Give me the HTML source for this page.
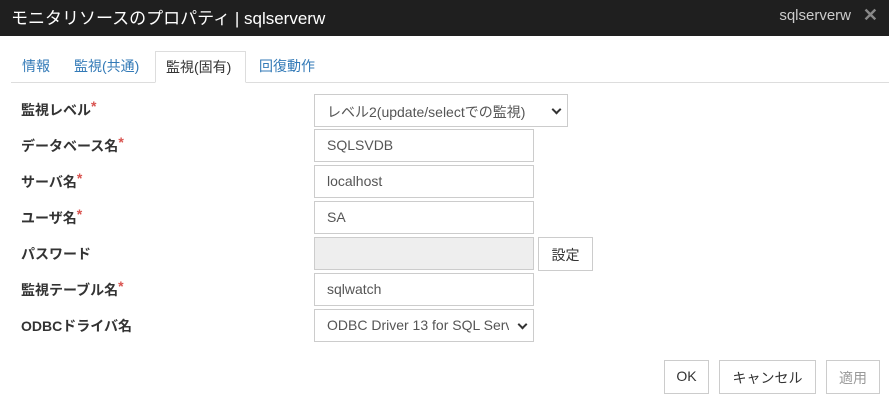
<!DOCTYPE html>
<html><head><meta charset="utf-8"><style>
*{box-sizing:border-box;margin:0;padding:0}
body{width:889px;height:401px;background:#fff;font-family:"Liberation Sans","Noto Sans CJK JP",sans-serif;font-size:14px;color:#333;position:relative;overflow:hidden}
.hd{position:absolute;left:0;top:0;width:889px;height:36px;background:#1f1f1f;color:#fff}
.hd .t{position:absolute;left:11px;top:4px;font-size:17px}
.hd .r{position:absolute;right:38px;top:7px;font-size:15px;color:#ccc}
.hd .x{position:absolute;right:11px;top:5px;font-size:18px;color:#888;font-weight:bold}
.tabline{position:absolute;left:11px;right:0;top:82px;border-top:1px solid #ddd}
.tab{position:absolute;top:52px;font-size:14px;color:#337ab7}
.act{position:absolute;left:155px;top:51px;width:91px;height:32px;border:1px solid #ddd;border-bottom:1px solid #fff;background:#fff;color:#333;padding:5px 0 0 10px}
.lb{position:absolute;left:21px;font-weight:bold;font-size:14px;color:#333}
.lb i{color:#d9534f;font-style:normal;font-size:14px;position:relative;top:-4px}
.in{position:absolute;left:314px;width:220px;height:33px;border:1px solid #ccc;padding:7px 0 0 12px;font-size:14px;color:#555;background:#fff}
.sel::after{content:"";position:absolute;right:7px;top:11px;width:5px;height:5px;border-right:2px solid #333;border-bottom:2px solid #333;transform:rotate(45deg)}
.btn{position:absolute;height:34px;border:1px solid #ccc;background:#fff;text-align:center;padding-top:7px;font-size:14px;color:#333}
</style></head><body>
<div class="hd"><span class="t">モニタリソースのプロパティ | sqlserverw</span><span class="r">sqlserverw</span><span class="x">✕</span></div>
<div class="tabline"></div>
<span class="tab" style="left:22px;top:56px">情報</span>
<span class="tab" style="left:74px;top:56px">監視(共通)</span>
<div class="act">監視(固有)</div>
<span class="tab" style="left:259px;top:56px">回復動作</span>

<span class="lb" style="top:100px">監視レベル<i>*</i></span>
<div class="in sel" style="top:94px;width:254px">レベル2(update/selectでの監視)</div>
<span class="lb" style="top:136px">データベース名<i>*</i></span>
<div class="in" style="top:129px">SQLSVDB</div>
<span class="lb" style="top:172px">サーバ名<i>*</i></span>
<div class="in" style="top:165px">localhost</div>
<span class="lb" style="top:208px">ユーザ名<i>*</i></span>
<div class="in" style="top:201px">SA</div>
<span class="lb" style="top:244px">パスワード</span>
<div class="in" style="top:237px;background:#eee"></div>
<div class="btn" style="left:538px;top:237px;width:55px">設定</div>
<span class="lb" style="top:280px">監視テーブル名<i>*</i></span>
<div class="in" style="top:273px">sqlwatch</div>
<span class="lb" style="top:316px">ODBCドライバ名</span>
<div class="in sel" style="top:309px;white-space:nowrap;overflow:hidden"><span style="display:inline-block;width:182px;overflow:hidden;vertical-align:top">ODBC Driver 13 for SQL Server</span></div>

<div class="btn" style="left:664px;top:360px;width:45px">OK</div>
<div class="btn" style="left:719px;top:360px;width:97px">キャンセル</div>
<div class="btn" style="left:826px;top:360px;width:54px;color:#999">適用</div>
</body></html>
